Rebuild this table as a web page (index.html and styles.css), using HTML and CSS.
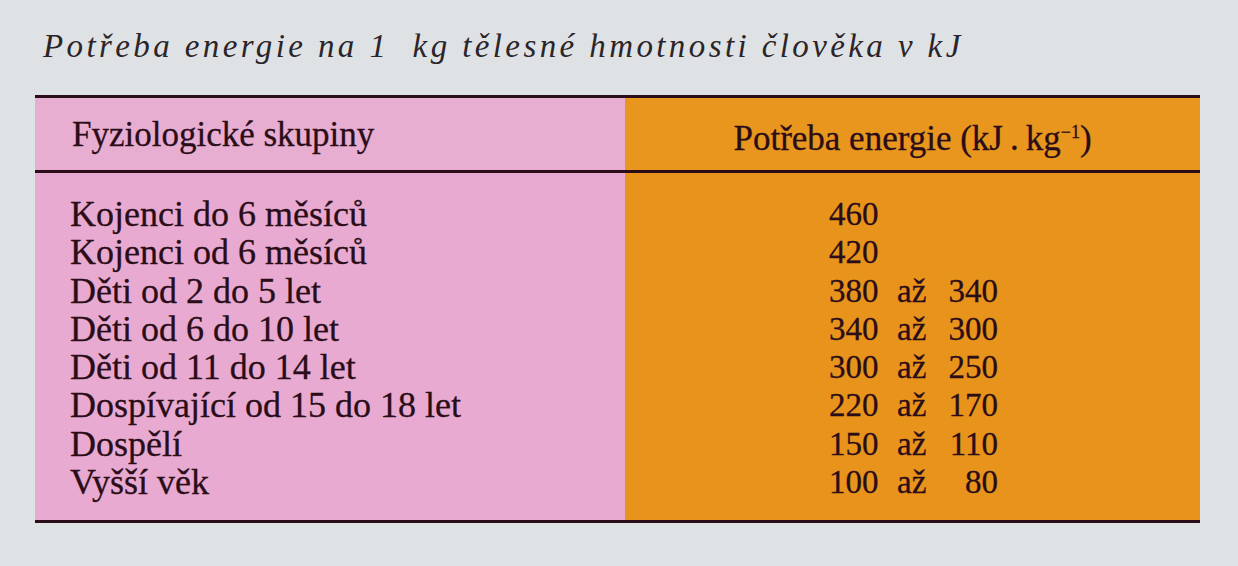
FILE: index.html
```html
<!DOCTYPE html>
<html lang="cs">
<head>
<meta charset="utf-8">
<title>Potřeba energie</title>
<link rel="stylesheet" href="styles.css">
</head>
<body>
<div class="page">
  <h1 class="title">Potřeba energie na 1&nbsp; kg tělesné hmotnosti člověka v kJ</h1>
  <div class="table">
    <div class="head">
      <div class="cell left">Fyziologické skupiny</div>
      <div class="cell right"><span>Potřeba energie (kJ&#8201;.&#8201;kg<sup>−1</sup>)</span></div>
    </div>
    <div class="body">
      <div class="col left">
        <div class="row">Kojenci do 6 měsíců</div>
        <div class="row">Kojenci od 6 měsíců</div>
        <div class="row">Děti od 2 do 5 let</div>
        <div class="row">Děti od 6 do 10 let</div>
        <div class="row">Děti od 11 do 14 let</div>
        <div class="row">Dospívající od 15 do 18 let</div>
        <div class="row">Dospělí</div>
        <div class="row">Vyšší věk</div>
      </div>
      <div class="col right">
        <div class="vals">
          <span>460</span><span></span><span></span>
          <span>420</span><span></span><span></span>
          <span>380</span><span>až</span><span class="n2">340</span>
          <span>340</span><span>až</span><span class="n2">300</span>
          <span>300</span><span>až</span><span class="n2">250</span>
          <span>220</span><span>až</span><span class="n2">170</span>
          <span>150</span><span>až</span><span class="n2">110</span>
          <span>100</span><span>až</span><span class="n2">80</span>
        </div>
      </div>
    </div>
  </div>
</div>
</body>
</html>
```

FILE: styles.css
```css
html, body {
  margin: 0;
  padding: 0;
}
body {
  background: #dfe2e5;
  color: #2a0d18;
  font-family: "Liberation Serif", "Times New Roman", serif;
  width: 1238px;
  height: 566px;
  overflow: hidden;
}
.page {
  padding: 28px 0 0 35px;
}
.title {
  margin: 0 0 0 8px;
  font-weight: normal;
  font-style: italic;
  font-size: 33px;
  line-height: 36px;
  letter-spacing: 3.4px;
  color: #2b2529;
}
.table {
  margin-top: 31px;
  width: 1165px;
  border-top: 3px solid #2a0d18;
  border-bottom: 3px solid #2a0d18;
  -webkit-text-stroke: 0.3px #2a0d18;
}
.head {
  display: grid;
  grid-template-columns: 590px 575px;
  border-bottom: 3px solid #2a0d18;
}
.cell {
  height: 72px;
  display: flex;
  align-items: center;
  font-size: 35px;
  line-height: 40px;
  box-sizing: border-box;
}
.head .left {
  background: #e8aed2;
  padding-left: 37px;
  padding-top: 2px;
}
.head .right {
  background: #e8961e;
  justify-content: center;
  padding-top: 10px;
}
sup {
  font-size: 18px;
  line-height: 1;
  vertical-align: 12px;
}
.body {
  display: grid;
  grid-template-columns: 590px 575px;
}
.col {
  padding: 22px 0 19px;
  font-size: 36px;
  line-height: 38.3px;
}
.col.left {
  background: #e8aad0;
  padding-left: 35px;
}
.col.right {
  background: #e8931c;
  padding-left: 204px;
}
.vals {
  display: grid;
  grid-template-columns: 68px 40px 61px;
  font-size: 33px;
}
.vals .n2 {
  text-align: right;
}
```
